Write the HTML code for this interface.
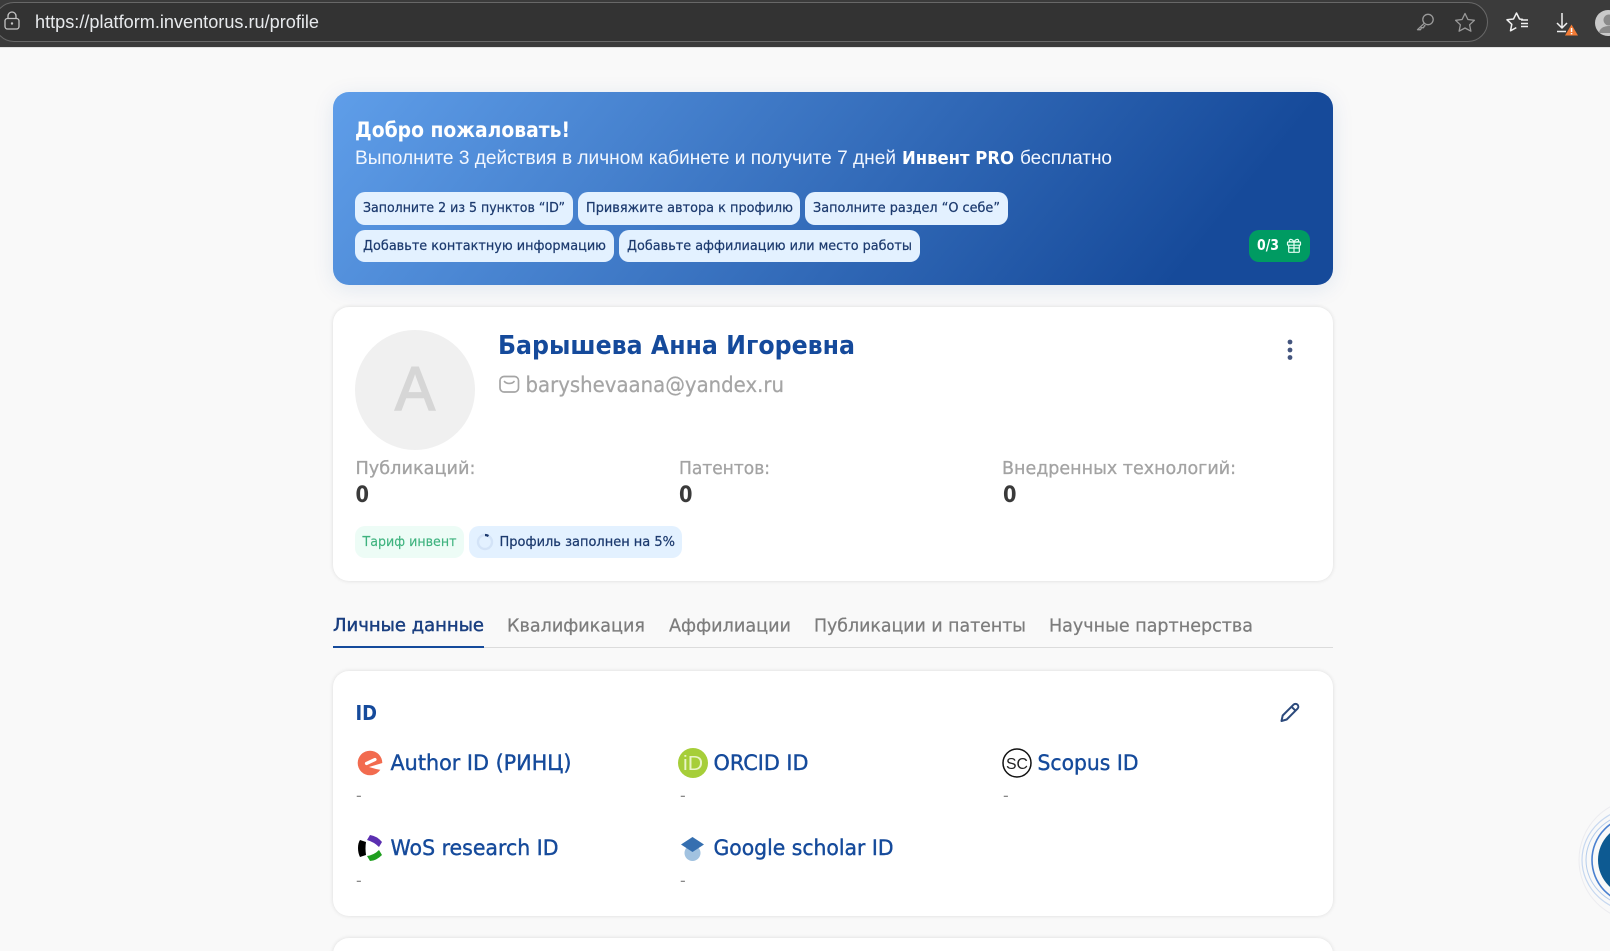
<!DOCTYPE html>
<html lang="ru">
<head>
<meta charset="utf-8">
<title>Профиль</title>
<style>
html,body{margin:0;padding:0;width:1610px;height:951px;overflow:hidden;background:#f9f9f9}
#page{position:relative;width:1610px;height:951px;overflow:hidden;background:#f9f9f9}
.box{position:absolute;box-sizing:border-box}
.bar{left:0;top:0;width:1610px;height:48px;background:#3b3b3b;border-bottom:1px solid #e2e2e2}
.pill{left:-6px;top:2px;width:1494px;height:40px;background:#333;border:1.5px solid #686868;border-radius:20px}
.banner{left:333px;top:92px;width:1000px;height:193px;border-radius:16px;background:linear-gradient(129deg,#5f9ee9 0%,#164a9a 86%);box-shadow:0 4px 22px rgba(21,74,155,.10)}
.card{left:333px;width:1000px;background:#fff;border-radius:16px;box-shadow:0 0 4px rgba(0,0,0,.12)}
.chip{background:#e3f1ff;border-radius:10px}
svg{position:absolute;left:0;top:0}
text{font-family:"DejaVu Sans","Liberation Sans",sans-serif;white-space:pre}
.l{font-family:"Liberation Sans",sans-serif}
.b{font-weight:700}
.chipt{font-size:13px;fill:#1c3a6e;stroke:#1c3a6e;stroke-width:.22px}
.tab{font-size:17.500px;fill:#7c7c7c;stroke:#7c7c7c;stroke-width:.25px}
.lab{font-size:21px;fill:#154a9b;stroke:#154a9b;stroke-width:.4px}
.stat{font-size:18px;fill:#a3a3a3;stroke:#a3a3a3;stroke-width:.3px}
.zero{font-size:22px;font-weight:700;fill:#3a3a3a}
.dash{font-size:17px;fill:#888;font-family:"Liberation Sans",sans-serif}
</style>
</head>
<body>
<div id="page">
<div class="box bar"></div>
<div class="box pill"></div>

<div class="box banner"></div>
<div class="box chip" style="left:355px;top:192px;width:218px;height:33px"></div>
<div class="box chip" style="left:578px;top:192px;width:222px;height:33px"></div>
<div class="box chip" style="left:805px;top:192px;width:203px;height:33px"></div>
<div class="box chip" style="left:355px;top:230px;width:259px;height:32px"></div>
<div class="box chip" style="left:619px;top:230px;width:301px;height:32px"></div>
<div class="box" style="left:1249px;top:230px;width:61px;height:32px;background:#009b62;border-radius:10px"></div>

<div class="box card" style="top:307px;height:274px"></div>
<div class="box" style="left:355px;top:330px;width:120px;height:120px;border-radius:50%;background:#f0f0f0"></div>
<div class="box" style="left:355px;top:526px;width:109px;height:32px;border-radius:10px;background:#edfcf6"></div>
<div class="box chip" style="left:469px;top:526px;width:213px;height:32px"></div>

<div class="box" style="left:333px;top:647px;width:1000px;height:1px;background:#dcdcdc"></div>
<div class="box" style="left:333px;top:646px;width:151px;height:2px;background:#154a9b"></div>

<div class="box card" style="top:671px;height:245px"></div>
<div class="box card" style="top:938px;height:60px"></div>

<svg width="1610" height="951" viewBox="0 0 1610 951" xmlns="http://www.w3.org/2000/svg">
  <!-- browser bar -->
  <g fill="none" stroke="#c4c4c4" stroke-width="1.3">
    <rect x="5" y="18.5" width="14" height="10.5" rx="2.5"/>
    <path d="M8 18.5v-2.5a4 4 0 0 1 8 0v2.5"/>
  </g>
  <circle cx="12" cy="23.5" r="1.2" fill="#c4c4c4"/>
  <text class="l" x="35" y="28" font-size="18" fill="#e8eaed" textLength="284" lengthAdjust="spacingAndGlyphs">https://platform.inventorus.ru/profile</text>

  <g fill="none" stroke="#9a9a9a" stroke-width="1.3" stroke-linejoin="round">
    <circle cx="1428" cy="19.5" r="5.200"/>
    <path d="M1424.300 23.200l-6.800 6.500h3l1-2h2l1-2h1"/>
    <path d="M1465 13.500l2.900 6 6.500.8-4.800 4.500 1.300 6.400-5.900-3.200-5.900 3.200 1.300-6.400-4.800-4.500 6.500-.8z"/>
  </g>
  <g fill="none" stroke="#f0f0f0" stroke-width="1.500" stroke-linejoin="round">
    <path d="M1523 19.500l-3.500-.5-3-6-3 6-6.500.8 4.800 4.500-1.300 6.500 5.800-3.200"/>
    <path d="M1521 20h7M1521 23.500h7M1521 26.500h7"/>
    <path d="M1562 13v15M1557 23l5 5 5-5M1557 31.500h9"/>
  </g>
  <path d="M1571.500 24.500l6.500 11h-13z" fill="#f27b35"/>
  <rect x="1570.800" y="28" width="1.500" height="4" fill="#fff"/><rect x="1570.800" y="33" width="1.500" height="1.300" fill="#fff"/>
  <circle cx="1608" cy="23" r="13" fill="#c9c9c9"/>
  <circle cx="1609" cy="20" r="5.500" fill="#8a8a8a"/>
  <path d="M1599 33a10 7 0 0 1 20 0z" fill="#8a8a8a"/>

  <!-- banner -->
  <text class="b" x="355" y="137" font-size="21" fill="#fff" textLength="215" lengthAdjust="spacingAndGlyphs">Добро пожаловать!</text>
  <text class="l" x="355" y="164" font-size="19.500" fill="#f2f7ff" textLength="541" lengthAdjust="spacingAndGlyphs">Выполните 3 действия в личном кабинете и получите 7 дней</text>
  <text class="b" x="902" y="164" font-size="17.500" fill="#fff" textLength="112" lengthAdjust="spacingAndGlyphs">Инвент PRO</text>
  <text class="l" x="1020" y="164" font-size="19.500" fill="#f2f7ff" textLength="92" lengthAdjust="spacingAndGlyphs">бесплатно</text>

  <text class="chipt" x="363" y="212" textLength="202" lengthAdjust="spacingAndGlyphs">Заполните 2 из 5 пунктов “ID”</text>
  <text class="chipt" x="586" y="212" textLength="207" lengthAdjust="spacingAndGlyphs">Привяжите автора к профилю</text>
  <text class="chipt" x="813" y="212" textLength="187" lengthAdjust="spacingAndGlyphs">Заполните раздел “О себе”</text>
  <text class="chipt" x="363" y="250" textLength="243" lengthAdjust="spacingAndGlyphs">Добавьте контактную информацию</text>
  <text class="chipt" x="627" y="250" textLength="285" lengthAdjust="spacingAndGlyphs">Добавьте аффилиацию или место работы</text>

  <text class="b" x="1257" y="250" font-size="15" fill="#fff" textLength="22" lengthAdjust="spacingAndGlyphs">0/3</text>
  <g fill="none" stroke="#e6fff4" stroke-width="1.200" stroke-linejoin="round" stroke-linecap="round">
    <rect x="1287.500" y="242" width="13" height="3.200" rx=".6"/>
    <path d="M1288.700 245.200v6.300a.8.8 0 0 0 .8.8h9a.8.8 0 0 0 .8-.8v-6.300M1294 242v10.300M1288.700 248h10.600"/>
    <path d="M1294 242c-1.500-3-4.600-3.400-4.600-1.200 0 1 .9 1.200 2 1.200zM1294 242c1.500-3 4.600-3.400 4.600-1.200 0 1-.9 1.200-2 1.200z"/>
  </g>

  <!-- profile card -->
  <text class="l" x="395" y="410" font-size="62" fill="#d6d6d6" stroke="#d6d6d6" stroke-width="1.600" textLength="40" lengthAdjust="spacingAndGlyphs">А</text>
  <text class="b" x="498" y="354" font-size="26" fill="#154a9b" textLength="357" lengthAdjust="spacingAndGlyphs">Барышева Анна Игоревна</text>
  <rect x="500" y="376.500" width="18.500" height="15.500" rx="4" fill="none" stroke="#a5a5a5" stroke-width="1.700"/>
  <path d="M504.500 381.500c2 2.600 7.500 2.600 9.500 0" fill="none" stroke="#a5a5a5" stroke-width="1.700" stroke-linecap="round"/>
  <text x="525.500" y="392" font-size="21" fill="#a5a5a5" stroke="#a5a5a5" stroke-width=".25" textLength="258.500" lengthAdjust="spacingAndGlyphs">baryshevaana@yandex.ru</text>
  <g fill="#44557e"><circle cx="1290" cy="342" r="2.400"/><circle cx="1290" cy="350" r="2.400"/><circle cx="1290" cy="357.500" r="2.400"/></g>

  <text class="stat" x="355.500" y="474" textLength="120" lengthAdjust="spacingAndGlyphs">Публикаций:</text>
  <text class="stat" x="679" y="474" textLength="91" lengthAdjust="spacingAndGlyphs">Патентов:</text>
  <text class="stat" x="1002" y="474" textLength="234" lengthAdjust="spacingAndGlyphs">Внедренных технологий:</text>
  <text class="zero" x="355.500" y="502" textLength="13.500" lengthAdjust="spacingAndGlyphs">0</text>
  <text class="zero" x="679" y="502" textLength="13.500" lengthAdjust="spacingAndGlyphs">0</text>
  <text class="zero" x="1003" y="502" textLength="13.500" lengthAdjust="spacingAndGlyphs">0</text>

  <text x="362.500" y="546" font-size="13" fill="#3fb37f" stroke="#3fb37f" stroke-width=".15" textLength="94" lengthAdjust="spacingAndGlyphs">Тариф инвент</text>
  <circle cx="485" cy="542" r="7" fill="none" stroke="#d3e3f7" stroke-width="2.400"/>
  <path d="M485 535a7 7 0 0 1 3.500 1" fill="none" stroke="#1c3a6e" stroke-width="2.200"/>
  <text x="499.500" y="546" font-size="13" fill="#1c3a6e" stroke="#1c3a6e" stroke-width=".22" textLength="175.500" lengthAdjust="spacingAndGlyphs">Профиль заполнен на 5%</text>

  <!-- tabs -->
  <text x="333" y="631" font-size="17.500" fill="#1a3f80" stroke="#1a3f80" stroke-width=".45" textLength="151" lengthAdjust="spacingAndGlyphs">Личные данные</text>
  <text class="tab" x="507" y="631.500" textLength="138" lengthAdjust="spacingAndGlyphs">Квалификация</text>
  <text class="tab" x="669" y="631.500" textLength="122" lengthAdjust="spacingAndGlyphs">Аффилиации</text>
  <text class="tab" x="814" y="631.500" textLength="212" lengthAdjust="spacingAndGlyphs">Публикации и патенты</text>
  <text class="tab" x="1049" y="631.500" textLength="204" lengthAdjust="spacingAndGlyphs">Научные партнерства</text>

  <!-- ID card -->
  <text class="b" x="355.500" y="720" font-size="20" fill="#154a9b" textLength="21.500" lengthAdjust="spacingAndGlyphs">ID</text>
  <path d="M1281.500 721l1.200-5.500 10.800-10.800a2.800 2.800 0 0 1 4 4l-10.800 10.800zM1291.500 706.700l4 4" fill="none" stroke="#2c4a7c" stroke-width="2" stroke-linejoin="round"/>

  <text class="lab" x="390.500" y="770" textLength="181" lengthAdjust="spacingAndGlyphs">Author ID (РИНЦ)</text>
  <text class="lab" x="713.500" y="770" textLength="95" lengthAdjust="spacingAndGlyphs">ORCID ID</text>
  <text class="lab" x="1037.500" y="770" textLength="101" lengthAdjust="spacingAndGlyphs">Scopus ID</text>
  <text class="lab" x="390.500" y="855" textLength="168" lengthAdjust="spacingAndGlyphs">WoS research ID</text>
  <text class="lab" x="713.500" y="855" textLength="180" lengthAdjust="spacingAndGlyphs">Google scholar ID</text>

  <text class="dash" x="356" y="801">-</text>
  <text class="dash" x="680" y="801">-</text>
  <text class="dash" x="1003" y="801">-</text>
  <text class="dash" x="356" y="886">-</text>
  <text class="dash" x="680" y="886">-</text>

  <!-- elibrary e -->
  <circle cx="370" cy="763" r="12.300" fill="#f26b4f"/>
  <path d="M366.500 763.500L375 759.500" stroke="#fff" stroke-width="3.200" stroke-linecap="round"/>
  <path d="M369 767L384 762.500V770.500L376 769z" fill="#fff"/>
  <!-- orcid -->
  <circle cx="693" cy="763" r="15" fill="#a6ce39"/>
  <text class="l" x="683" y="770" font-size="20" fill="#e9f4c8" textLength="20" lengthAdjust="spacingAndGlyphs">iD</text>
  <!-- scopus -->
  <circle cx="1017" cy="763" r="14" fill="#fff" stroke="#111" stroke-width="1.500"/>
  <text class="l" x="1006" y="769" font-size="16" fill="#222" textLength="22" lengthAdjust="spacingAndGlyphs">SC</text>
  <!-- wos -->
  <path d="M358 848Q358 843 360 840L366 842Q365 848 366 855L360 857Q358 853 358 848z" fill="#000"/>
  <path d="M367 840L370 835Q377 836 382 842L379 847Q374 842 367 840z" fill="#5b2fb0"/>
  <path d="M367 856Q374 855 379 850L382 855Q376 861 370 861z" fill="#1f9e1f"/>
  <!-- scholar -->
  <circle cx="692.500" cy="853" r="8" fill="#a1c2e0"/>
  <path d="M692.500 837l11.500 7.500-11.500 7.500-11.500-7.500z" fill="#356fb0"/>

  <!-- floating widget -->
  <g fill="none">
    <circle cx="1640" cy="860" r="61" stroke="#ececf0" stroke-width="1"/>
    <ellipse cx="1640" cy="860" rx="58" ry="53" stroke="#c7d8f0" stroke-width="1.200"/>
    <ellipse cx="1640" cy="860" rx="54" ry="48" stroke="#b5cdec" stroke-width="1"/>
    <circle cx="1636" cy="860" r="44" stroke="#4a80d0" stroke-width="1.600"/>
  </g>
  <circle cx="1634" cy="860" r="36" fill="#0d5a92"/>
</svg>
</div>
</body>
</html>
